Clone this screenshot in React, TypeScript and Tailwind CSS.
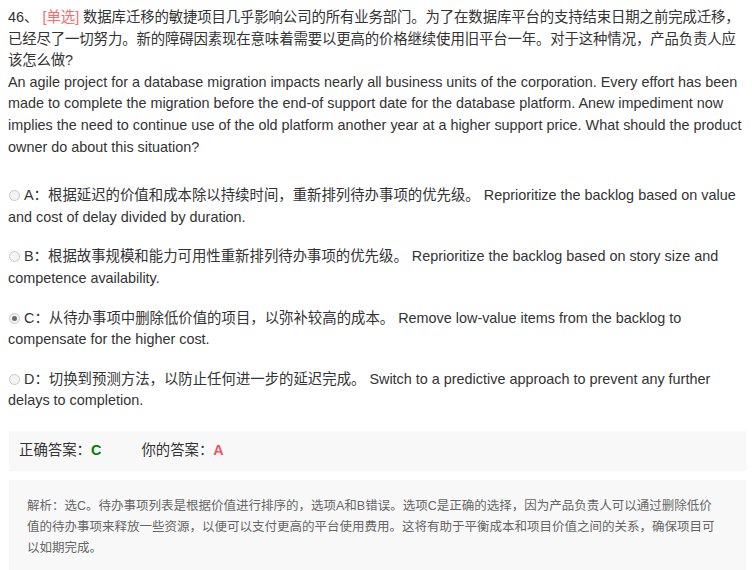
import React from "react";

const options = [
  {
    key: "A",
    zh: "根据延迟的价值和成本除以持续时间，重新排列待办事项的优先级。",
    en: "Reprioritize the backlog based on value and cost of delay divided by duration.",
  },
  {
    key: "B",
    zh: "根据故事规模和能力可用性重新排列待办事项的优先级。",
    en: "Reprioritize the backlog based on story size and competence availability.",
  },
  {
    key: "C",
    zh: "从待办事项中删除低价值的项目，以弥补较高的成本。",
    en: "Remove low-value items from the backlog to compensate for the higher cost.",
  },
  {
    key: "D",
    zh: "切换到预测方法，以防止任何进一步的延迟完成。",
    en: "Switch to a predictive approach to prevent any further delays to completion.",
  },
];

const selected = "C";

function Radio({ checked }: { checked: boolean }) {
  return (
    <span className="relative inline-block w-[11px] h-[11px] rounded-full border border-[#c8c8c8] bg-[#f4f4f4] align-[-1px] ml-px mr-[4px]">
      {checked && (
        <span className="absolute left-[2px] top-[2px] w-[5px] h-[5px] rounded-full bg-[#6b6b6b]" />
      )}
    </span>
  );
}

export default function App() {
  return (
    <div
      className="w-[752px] h-[570px] bg-white pl-2 pr-[4px] pt-[7px] text-[14.4px] leading-[21.6px] text-[#333]"
      style={{ fontFamily: '"Liberation Sans", Arial, "Noto Sans CJK SC", sans-serif' }}
    >
      {/* question */}
      <div>
        <span>46、 </span>
        <span className="text-[#f56c6c]">[单选]</span>
        <span className="tracking-[-0.12px]"> 数据库迁移的敏捷项目几乎影响公司的所有业务部门。为了在数据库平台的支持结束日期之前完成迁移，已经尽了一切努力。新的障碍因素现在意味着需要以更高的价格继续使用旧平台一年。对于这种情况，产品负责人应该怎么做?</span>
      </div>
      <div>
        An agile project for a database migration impacts nearly all business units of the corporation. Every effort has been
        made to complete the migration before the end-of support date for the database platform. Anew impediment now
        implies the need to continue use of the old platform another year at a higher support price. What should the product
        owner do about this situation?
      </div>

      {/* options */}
      <div className="mt-[27px] flex flex-col gap-[18px]">
        {options.map((o) => (
          <div key={o.key}>
            <Radio checked={o.key === selected} />
            <span>
              {o.key}：{o.zh} {o.en}
            </span>
          </div>
        ))}
      </div>

      {/* answer */}
      <div className="mt-[19px] ml-px mr-[2px] h-[40px] bg-[#f8f8f8] flex items-center pl-[10px]">
        <span>正确答案：</span>
        <span className="font-bold text-[#008000]">C</span>
        <span className="ml-[40px]">你的答案：</span>
        <span className="font-bold text-[#f5515f]">A</span>
      </div>

      {/* analysis */}
      <div className="mt-[9px] ml-px mr-[2px] h-[90px] bg-[#f8f8f8] pl-[18px] pr-[24px] pt-[16px] text-[12.5px] leading-[21px] text-[#666]">
        解析：选C。待办事项列表是根据价值进行排序的，选项A和B错误。选项C是正确的选择，因为产品负责人可以通过删除低价值的待办事项来释放一些资源，以便可以支付更高的平台使用费用。这将有助于平衡成本和项目价值之间的关系，确保项目可以如期完成。
      </div>
    </div>
  );
}
